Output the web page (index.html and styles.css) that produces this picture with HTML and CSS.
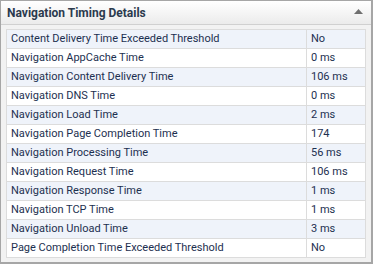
FILE: index.html
```html
<!DOCTYPE html>
<html>
<head>
<meta charset="utf-8">
<link rel="stylesheet" href="styles.css">
</head>
<body>
<div class="panel">
  <div class="panel-header">
    <span class="panel-title">Navigation Timing Details</span>
    <span class="collapse-btn"><svg width="9" height="5" viewBox="0 0 9 5"><polygon points="0,5 9,5 4.5,0" fill="#6f6f6f"/></svg></span>
  </div>
  <div class="panel-body">
    <table class="grid">
      <tr><td class="name">Content Delivery Time Exceeded Threshold</td><td class="val">No</td></tr>
      <tr><td class="name">Navigation AppCache Time</td><td class="val">0 ms</td></tr>
      <tr><td class="name">Navigation Content Delivery Time</td><td class="val">106 ms</td></tr>
      <tr><td class="name">Navigation DNS Time</td><td class="val">0 ms</td></tr>
      <tr><td class="name">Navigation Load Time</td><td class="val">2 ms</td></tr>
      <tr><td class="name">Navigation Page Completion Time</td><td class="val">174</td></tr>
      <tr><td class="name">Navigation Processing Time</td><td class="val">56 ms</td></tr>
      <tr><td class="name">Navigation Request Time</td><td class="val">106 ms</td></tr>
      <tr><td class="name">Navigation Response Time</td><td class="val">1 ms</td></tr>
      <tr><td class="name">Navigation TCP Time</td><td class="val">1 ms</td></tr>
      <tr><td class="name">Navigation Unload Time</td><td class="val">3 ms</td></tr>
      <tr><td class="name">Page Completion Time Exceeded Threshold</td><td class="val">No</td></tr>
    </table>
  </div>
</div>
</body>
</html>
```

FILE: styles.css
```css
html, body {
  margin: 0;
  padding: 0;
  background: #ffffff;
}

.panel {
  width: 373px;
  height: 264px;
  box-sizing: border-box;
  border: 1px solid #a6a6a6;
  border-right-width: 2px;
  border-bottom-width: 2px;
  background: #f2f2f2;
  font-family: Roboto, "Liberation Sans", sans-serif;
  display: flex;
  flex-direction: column;
}

.panel-header {
  height: 23px;
  flex: none;
  display: flex;
  align-items: center;
  justify-content: space-between;
  padding: 0 8px 0 6px;
  background: linear-gradient(#ffffff, #ebebeb);
  border-bottom: 1px solid #d0d0d0;
}

.panel-title {
  font-weight: bold;
  font-size: 12px;
  color: #2b3a4e;
}

.collapse-btn {
  display: flex;
  align-items: center;
  height: 10px;
  margin-top: -2px;
}

.panel-body {
  flex: 1;
  padding: 4px 5px 4px 5px;
}

.grid {
  width: 100%;
  border-collapse: collapse;
  background: #ffffff;
  border: 1px solid #cfcfcf;
  font-size: 11px;
  color: #1d3050;
}

.grid tr:nth-child(odd) td {
  background: #eff3fa;
}

.grid td {
  height: 18px;
  padding: 0 0 0 4px;
  border: 1px solid #dcdcdc;
  white-space: nowrap;
  line-height: 18px;
}

.grid td.val {
  width: 54px;
}
```
